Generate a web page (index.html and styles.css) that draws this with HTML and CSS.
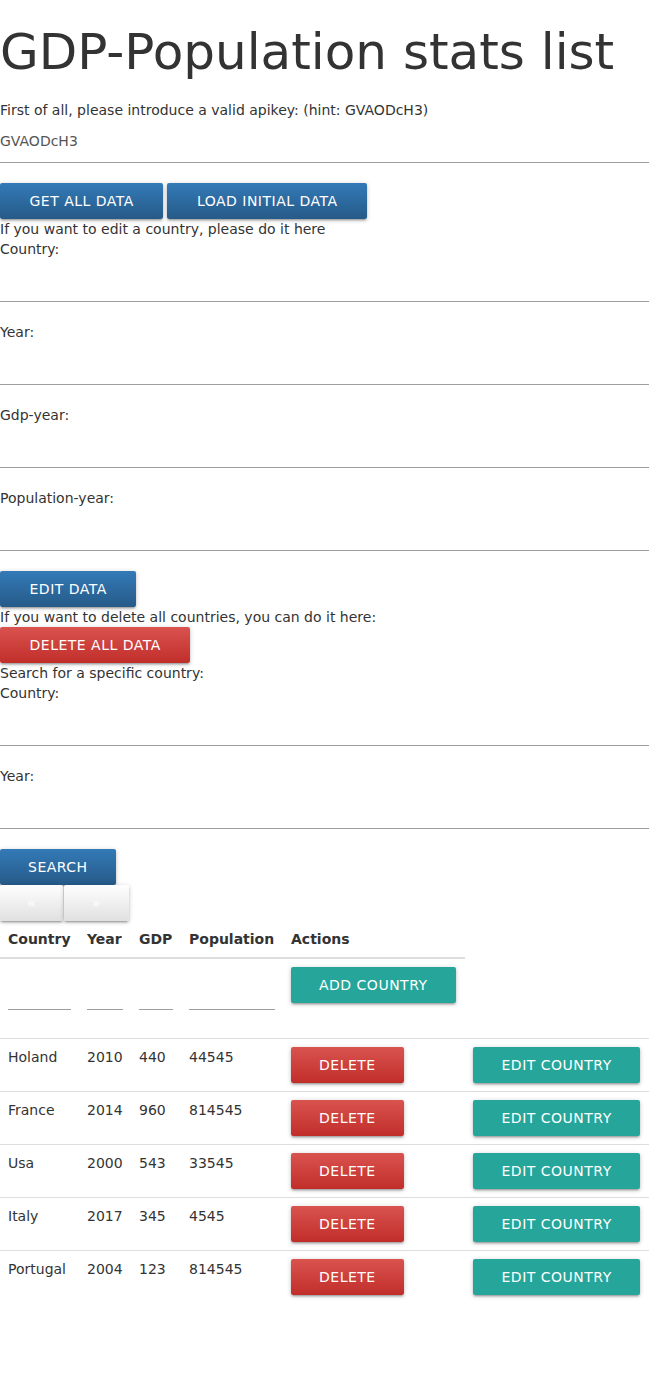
FILE: index.html
```html
<!DOCTYPE html>
<html>
<head>
<meta charset="utf-8">
<title>GDP-Population stats list</title>
<link rel="stylesheet" href="styles.css">
</head>
<body>
<div class="page">
  <h1 class="title">GDP-Population stats list</h1>
  <p class="line">First of all, please introduce a valid apikey: (hint: GVAODcH3)</p>
  <input class="field key" type="text" value="GVAODcH3">
  <div class="btn-row">
    <button class="btn btn-blue btn-wide">Get all data</button>
    <button class="btn btn-blue btn-wide">Load initial data</button>
  </div>
  <p class="line">If you want to edit a country, please do it here</p>
  <label class="line">Country:</label>
  <input class="field" type="text">
  <label class="line">Year:</label>
  <input class="field" type="text">
  <label class="line">Gdp-year:</label>
  <input class="field" type="text">
  <label class="line">Population-year:</label>
  <input class="field" type="text">
  <div class="btn-row"><button class="btn btn-blue btn-wide">Edit data</button></div>
  <p class="line">If you want to delete all countries, you can do it here:</p>
  <div class="btn-row"><button class="btn btn-red btn-wide">Delete all data</button></div>
  <p class="line">Search for a specific country:</p>
  <label class="line">Country:</label>
  <input class="field" type="text">
  <label class="line">Year:</label>
  <input class="field" type="text">
  <div class="btn-row"><button class="btn btn-blue">Search</button></div>
  <div class="pager">
    <button class="btn btn-light btn-prev">&laquo;</button><button class="btn btn-light btn-next">&raquo;</button>
  </div>
  <table class="data">
    <colgroup>
      <col class="c-country"><col class="c-year"><col class="c-gdp"><col class="c-pop"><col class="c-act"><col class="c-edit">
    </colgroup>
    <thead>
      <tr><th>Country</th><th>Year</th><th>GDP</th><th>Population</th><th>Actions</th></tr>
    </thead>
    <tbody>
      <tr class="new-row">
        <td><input class="field cell-field" type="text"></td>
        <td><input class="field cell-field" type="text"></td>
        <td><input class="field cell-field" type="text"></td>
        <td><input class="field cell-field" type="text"></td>
        <td><button class="btn btn-teal">Add country</button></td>
      </tr>
      <tr><td>Holand</td><td>2010</td><td>440</td><td>44545</td><td><button class="btn btn-red">Delete</button></td><td><button class="btn btn-teal btn-edit">Edit country</button></td></tr>
      <tr><td>France</td><td>2014</td><td>960</td><td>814545</td><td><button class="btn btn-red">Delete</button></td><td><button class="btn btn-teal btn-edit">Edit country</button></td></tr>
      <tr><td>Usa</td><td>2000</td><td>543</td><td>33545</td><td><button class="btn btn-red">Delete</button></td><td><button class="btn btn-teal btn-edit">Edit country</button></td></tr>
      <tr><td>Italy</td><td>2017</td><td>345</td><td>4545</td><td><button class="btn btn-red">Delete</button></td><td><button class="btn btn-teal btn-edit">Edit country</button></td></tr>
      <tr><td>Portugal</td><td>2004</td><td>123</td><td>814545</td><td><button class="btn btn-red">Delete</button></td><td><button class="btn btn-teal btn-edit">Edit country</button></td></tr>
    </tbody>
  </table>
</div>
</body>
</html>
```

FILE: styles.css
```css
html, body {
  margin: 0;
  padding: 0;
  background: #fff;
}
body {
  font-family: "DejaVu Sans", Verdana, sans-serif;
  font-size: 14px;
  line-height: 20px;
  color: #333;
}
.page {
  display: flex;
  flex-direction: column;
  align-items: stretch;
}
.title {
  font-weight: 400;
  font-size: 50px;
  line-height: 57px;
  margin: 24px 0 19px 0;
  color: #333;
}
.line {
  display: block;
  margin: 0;
}
.field {
  display: block;
  box-sizing: content-box;
  width: 100%;
  height: 42px;
  margin: 0 0 20px 0;
  padding: 0;
  border: none;
  border-bottom: 1px solid #9e9e9e;
  background: transparent;
  font-family: inherit;
  font-size: 14px;
  color: #555;
  outline: none;
}
.btn-row {
  display: flex;
  gap: 4px;
}
.btn {
  display: inline-block;
  height: 36px;
  line-height: 36px;
  padding: 0 28px;
  border: none;
  border-radius: 2px;
  font-family: "DejaVu Sans", Verdana, sans-serif;
  font-size: 14px;
  letter-spacing: 0.5px;
  text-transform: uppercase;
  color: #fff;
  white-space: nowrap;
  box-shadow: 0 2px 2px 0 rgba(0,0,0,0.14), 0 3px 1px -2px rgba(0,0,0,0.12), 0 1px 5px 0 rgba(0,0,0,0.2);
  cursor: pointer;
}
.btn-wide {
  padding: 0 29.5px;
}
.btn-edit {
  padding: 0 28.5px;
}
.btn-blue {
  background: linear-gradient(to bottom, #337ab7 0, #265a88 100%);
}
.btn-red {
  background: linear-gradient(to bottom, #d9534f 0, #c12e2a 100%);
}
.btn-teal {
  background: #26a69a;
}
.btn-light {
  background: linear-gradient(to bottom, #fff 0, #e0e0e0 100%);
  color: #fff;
  padding: 0;
  text-align: center;
}
.btn-prev {
  width: 63px;
}
.btn-next {
  width: 65px;
  margin-left: 1px;
}
.pager {
  display: flex;
}
.data {
  width: 100%;
  table-layout: fixed;
  border-collapse: collapse;
  border-spacing: 0;
}
.c-country { width: 79px; }
.c-year { width: 52px; }
.c-gdp { width: 50px; }
.c-pop { width: 102px; }
.c-act { width: 182px; }
.c-edit { width: 184px; }
.data th {
  text-align: left;
  font-weight: 700;
  padding: 8px;
  vertical-align: bottom;
  border-bottom: 2px solid #ddd;
}
.data td {
  padding: 8px;
  vertical-align: top;
  border-top: 1px solid #ddd;
}
.data tbody tr:first-child td {
  border-top: none;
}
.cell-field {
  width: 100%;
}
```
